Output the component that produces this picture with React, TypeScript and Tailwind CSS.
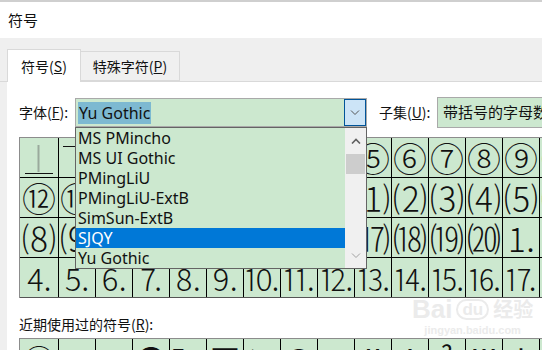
import React from "react";

const GRID_ROWS: string[][] = [
  ["", "", "", "", "", "①", "②", "③", "④", "⑤", "⑥", "⑦", "⑧", "⑨", "⑩", "⑪"],
  ["⑫", "⑬", "⑭", "⑮", "⑯", "⑰", "⑱", "⑲", "⑳", "⑴", "⑵", "⑶", "⑷", "⑸", "⑹", "⑺"],
  ["⑻", "⑼", "⑽", "⑾", "⑿", "⒀", "⒁", "⒂", "⒃", "⒄", "⒅", "⒆", "⒇", "⒈", "⒉", "⒊"],
  ["⒋", "⒌", "⒍", "⒎", "⒏", "⒐", "⒑", "⒒", "⒓", "⒔", "⒕", "⒖", "⒗", "⒘", "⒙", "⒚"],
];

const RECENT = ["①", "·", "", "●", "℡", "■", "↘", "©", "☎", "Ⅱ", "Ⅰ", "²", "Ⅲ", "†", "‡"];

const FONT_LIST = [
  "MS PMincho",
  "MS UI Gothic",
  "PMingLiU",
  "PMingLiU-ExtB",
  "SimSun-ExtB",
  "SJQY",
  "Yu Gothic",
];

const Chevron: React.FC<{ up?: boolean; className?: string }> = ({ up, className }) => (
  <svg width="10" height="6" viewBox="0 0 10 6" className={className}>
    <path
      d={up ? "M1 5.5 L5 1.5 L9 5.5" : "M1 0.5 L5 4.5 L9 0.5"}
      fill="none"
      stroke="currentColor"
      strokeWidth={up ? 1.6 : 1}
    />
  </svg>
);

const GridCell: React.FC<{ glyph: string; first?: boolean; row: number; col: number }> = ({
  glyph,
  first,
  row,
  col,
}) => (
  <div
    className={`flex h-full shrink-0 items-center justify-center overflow-hidden border-r border-black ${
      first ? "w-[39px]" : "w-[37px]"
    }`}
  >
    {row === 0 && col === 0 ? (
      <svg width="34" height="34" viewBox="0 0 34 34">
        <line x1="16.5" y1="4" x2="16.5" y2="31" stroke="#9aaa9c" strokeWidth="2" />
        <line x1="3" y1="32.5" x2="31" y2="32.5" stroke="#111" strokeWidth="1" />
      </svg>
    ) : row === 0 && col === 1 ? (
      <svg width="36" height="34" viewBox="0 0 36 34">
        <line x1="4" y1="5.5" x2="36" y2="5.5" stroke="#111" strokeWidth="1" />
      </svg>
    ) : (
      <span
        className={`font-light leading-none text-[#111] ${row === 3 ? "text-[31px]" : "text-[34px]"}`}
      >
        {glyph}
      </span>
    )}
  </div>
);

export default function App() {
  return (
    <div className="relative h-[350px] w-[542px] overflow-hidden bg-white font-['Microsoft_YaHei','Noto_Sans_CJK_SC',sans-serif] text-[#111]">
      {/* title bar */}
      <div className="flex h-[38px] items-center border-t-2 border-[#cfcfcf] pl-2 text-[15px]">
        符号
      </div>

      {/* tabs */}
      <div className="flex h-[44px] items-end border-b border-[#d9d9d9] bg-[#efefef] pl-[7px] text-[14px]">
        <div className="relative -mb-px flex h-[33px] w-[74px] items-center justify-center border border-b-0 border-[#d9d9d9] bg-white">
          <span>
            符号(<span className="underline">S</span>)
          </span>
        </div>
        <div className="flex h-[30px] w-[99px] items-center justify-center border border-l-0 border-[#d9d9d9] bg-[#f0f0f0]">
          <span>
            特殊字符(<span className="underline">P</span>)
          </span>
        </div>
      </div>

      {/* body */}
      <div className="flex">
        <div className="w-[7px] shrink-0 self-stretch bg-[#efefef]" />
        <div className="flex-1 pl-3 pt-[15px]">
          {/* font row */}
          <div className="flex items-center text-[14px]">
            <span className="w-[56px]">
              字体(<span className="underline">F</span>):
            </span>
            <div className="relative flex h-[29px] w-[292px] items-center border border-[#a9a9a9] bg-[#cce8cf] pl-[2px]">
              <span className="bg-[#7db9d1] px-px font-['Noto_Sans',sans-serif] text-[16px] leading-[22px]">
                Yu Gothic
              </span>
              <div className="absolute right-0 top-0 flex h-[27px] w-[22px] items-center justify-center border border-[#005499] bg-[#cce4f7] text-[#555]">
                <Chevron />
              </div>
            </div>
            <span className="ml-3 w-[58px]">
              子集(<span className="underline">U</span>):
            </span>
            <div className="flex h-[31px] flex-1 items-center border border-[#a9a9a9] bg-[#cce8cf] pl-[5px] whitespace-nowrap text-[15px]">
              带括号的字母数字
            </div>
          </div>

          {/* symbol grid */}
          <div className="mt-[9px] flex flex-col border-l border-t border-[#8c8c8c] bg-[#cce8cf]">
            {GRID_ROWS.map((row, r) => (
              <div
                key={r}
                className={`flex h-10 border-b ${r === GRID_ROWS.length - 1 ? "border-[#555]" : "border-black"}`}
              >
                {row.map((g, c) => (
                  <GridCell key={c} glyph={g} first={c === 0} row={r} col={c} />
                ))}
              </div>
            ))}
          </div>

          {/* recent */}
          <div className="mt-4 text-[14px] leading-5">
            近期使用过的符号(<span className="underline">R</span>):
          </div>
          <div className="mt-1 flex h-10 border-l border-t border-[#8c8c8c] bg-[#cce8cf]">
            {RECENT.map((g, i) => (
              <div
                key={i}
                className={`flex h-full shrink-0 items-center justify-center border-r border-black ${
                  i === 0 ? "w-[39px]" : "w-[37px]"
                }`}
              >
                <span className="text-[31px] leading-none">{g}</span>
              </div>
            ))}
          </div>
        </div>
      </div>

      {/* open font dropdown */}
      <div className="absolute left-[75px] top-[127px] flex h-[142px] w-[292px] border border-[#646464] bg-[#cce8cf]">
        <div className="flex flex-1 flex-col font-['Noto_Sans',sans-serif] text-[16px]">
          {FONT_LIST.map((f) => (
            <div
              key={f}
              className={`flex h-5 items-center pl-[2px] ${f === "SJQY" ? "bg-[#0078d7] text-white" : ""}`}
            >
              {f}
            </div>
          ))}
        </div>
        <div className="flex w-[21px] flex-col items-center bg-[#f0f0f0]">
          <div className="flex h-[26px] items-center text-[#606060]">
            <Chevron up />
          </div>
          <div className="h-5 w-[19px] bg-[#cdcdcd]" />
          <div className="flex-1" />
          <div className="flex h-[24px] items-center text-[#a0a0a0]">
            <Chevron />
          </div>
        </div>
      </div>

      {/* watermark */}
      <div className="pointer-events-none absolute left-[412px] top-[296px] flex flex-col items-center text-[#ebebeb]">
        <div className="flex items-center gap-1 font-['Liberation_Sans',sans-serif] text-[26px] font-bold leading-none">
          <span>Bai</span>
          <span className="rounded-full border-2 border-[#ebebeb] px-1 text-[17px]">du</span>
          <span className="font-['Noto_Sans_CJK_SC',sans-serif] text-[20px]">经验</span>
        </div>
        <div className="font-['Liberation_Sans',sans-serif] text-[11px] font-bold">jingyan.baidu.com</div>
      </div>
    </div>
  );
}
